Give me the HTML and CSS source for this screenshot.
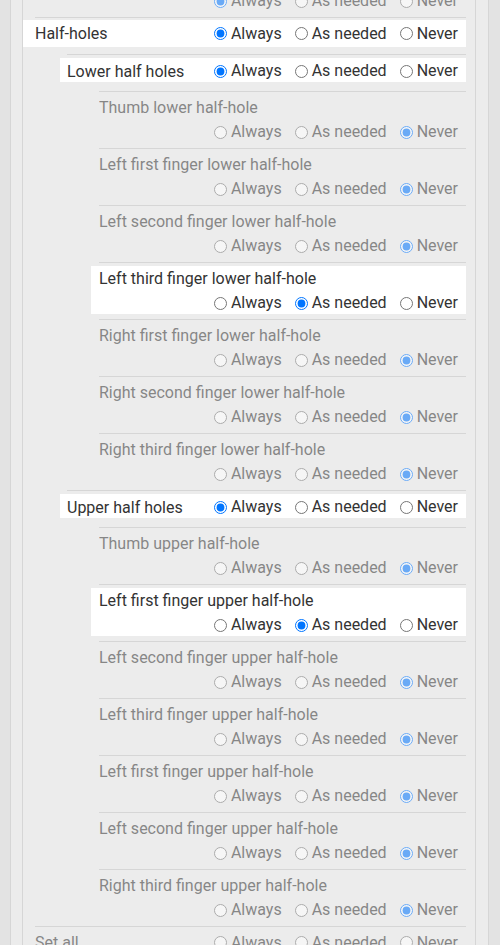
FILE: index.html
```html
<!DOCTYPE html>
<html>
<head>
<meta charset="utf-8">
<link rel="stylesheet" href="styles.css">
</head>
<body>
<div class="panel">
  <div class="list">
    <div class="item l0 off">
      <div class="row two">
        <div class="name">Holes</div>
        <div class="opts">
          <label class="opt"><input type="radio" name="g0" checked>Always</label>
          <label class="opt"><input type="radio" name="g0">As needed</label>
          <label class="opt"><input type="radio" name="g0">Never</label>
        </div>
      </div>
    </div>

    <div class="item l0 parent">
      <div class="row one hl">
        <div class="name">Half-holes</div>
        <div class="opts">
          <label class="opt"><input type="radio" name="g1" checked>Always</label>
          <label class="opt"><input type="radio" name="g1">As needed</label>
          <label class="opt"><input type="radio" name="g1">Never</label>
        </div>
      </div>
      <div class="children">

        <div class="item l1 parent">
          <div class="row one hl">
            <div class="name">Lower half holes</div>
            <div class="opts">
              <label class="opt"><input type="radio" name="g2" checked>Always</label>
              <label class="opt"><input type="radio" name="g2">As needed</label>
              <label class="opt"><input type="radio" name="g2">Never</label>
            </div>
          </div>
          <div class="children">
            <div class="item l2 off">
              <div class="row two">
                <div class="name">Thumb lower half-hole</div>
                <div class="opts">
                  <label class="opt"><input type="radio" name="a1">Always</label>
                  <label class="opt"><input type="radio" name="a1">As needed</label>
                  <label class="opt"><input type="radio" name="a1" checked>Never</label>
                </div>
              </div>
            </div>
            <div class="item l2 off">
              <div class="row two">
                <div class="name">Left first finger lower half-hole</div>
                <div class="opts">
                  <label class="opt"><input type="radio" name="a2">Always</label>
                  <label class="opt"><input type="radio" name="a2">As needed</label>
                  <label class="opt"><input type="radio" name="a2" checked>Never</label>
                </div>
              </div>
            </div>
            <div class="item l2 off">
              <div class="row two">
                <div class="name">Left second finger lower half-hole</div>
                <div class="opts">
                  <label class="opt"><input type="radio" name="a3">Always</label>
                  <label class="opt"><input type="radio" name="a3">As needed</label>
                  <label class="opt"><input type="radio" name="a3" checked>Never</label>
                </div>
              </div>
            </div>
            <div class="item l2">
              <div class="row two hl">
                <div class="name">Left third finger lower half-hole</div>
                <div class="opts">
                  <label class="opt"><input type="radio" name="a4">Always</label>
                  <label class="opt"><input type="radio" name="a4" checked>As needed</label>
                  <label class="opt"><input type="radio" name="a4">Never</label>
                </div>
              </div>
            </div>
            <div class="item l2 off">
              <div class="row two">
                <div class="name">Right first finger lower half-hole</div>
                <div class="opts">
                  <label class="opt"><input type="radio" name="a5">Always</label>
                  <label class="opt"><input type="radio" name="a5">As needed</label>
                  <label class="opt"><input type="radio" name="a5" checked>Never</label>
                </div>
              </div>
            </div>
            <div class="item l2 off">
              <div class="row two">
                <div class="name">Right second finger lower half-hole</div>
                <div class="opts">
                  <label class="opt"><input type="radio" name="a6">Always</label>
                  <label class="opt"><input type="radio" name="a6">As needed</label>
                  <label class="opt"><input type="radio" name="a6" checked>Never</label>
                </div>
              </div>
            </div>
            <div class="item l2 off">
              <div class="row two">
                <div class="name">Right third finger lower half-hole</div>
                <div class="opts">
                  <label class="opt"><input type="radio" name="a7">Always</label>
                  <label class="opt"><input type="radio" name="a7">As needed</label>
                  <label class="opt"><input type="radio" name="a7" checked>Never</label>
                </div>
              </div>
            </div>
          </div>
        </div>

        <div class="item l1 parent">
          <div class="row one hl">
            <div class="name">Upper half holes</div>
            <div class="opts">
              <label class="opt"><input type="radio" name="g3" checked>Always</label>
              <label class="opt"><input type="radio" name="g3">As needed</label>
              <label class="opt"><input type="radio" name="g3">Never</label>
            </div>
          </div>
          <div class="children">
            <div class="item l2 off">
              <div class="row two">
                <div class="name">Thumb upper half-hole</div>
                <div class="opts">
                  <label class="opt"><input type="radio" name="b1">Always</label>
                  <label class="opt"><input type="radio" name="b1">As needed</label>
                  <label class="opt"><input type="radio" name="b1" checked>Never</label>
                </div>
              </div>
            </div>
            <div class="item l2">
              <div class="row two hl">
                <div class="name">Left first finger upper half-hole</div>
                <div class="opts">
                  <label class="opt"><input type="radio" name="b2">Always</label>
                  <label class="opt"><input type="radio" name="b2" checked>As needed</label>
                  <label class="opt"><input type="radio" name="b2">Never</label>
                </div>
              </div>
            </div>
            <div class="item l2 off">
              <div class="row two">
                <div class="name">Left second finger upper half-hole</div>
                <div class="opts">
                  <label class="opt"><input type="radio" name="b3">Always</label>
                  <label class="opt"><input type="radio" name="b3">As needed</label>
                  <label class="opt"><input type="radio" name="b3" checked>Never</label>
                </div>
              </div>
            </div>
            <div class="item l2 off">
              <div class="row two">
                <div class="name">Left third finger upper half-hole</div>
                <div class="opts">
                  <label class="opt"><input type="radio" name="b4">Always</label>
                  <label class="opt"><input type="radio" name="b4">As needed</label>
                  <label class="opt"><input type="radio" name="b4" checked>Never</label>
                </div>
              </div>
            </div>
            <div class="item l2 off">
              <div class="row two">
                <div class="name">Left first finger upper half-hole</div>
                <div class="opts">
                  <label class="opt"><input type="radio" name="b5">Always</label>
                  <label class="opt"><input type="radio" name="b5">As needed</label>
                  <label class="opt"><input type="radio" name="b5" checked>Never</label>
                </div>
              </div>
            </div>
            <div class="item l2 off">
              <div class="row two">
                <div class="name">Left second finger upper half-hole</div>
                <div class="opts">
                  <label class="opt"><input type="radio" name="b6">Always</label>
                  <label class="opt"><input type="radio" name="b6">As needed</label>
                  <label class="opt"><input type="radio" name="b6" checked>Never</label>
                </div>
              </div>
            </div>
            <div class="item l2 off">
              <div class="row two">
                <div class="name">Right third finger upper half-hole</div>
                <div class="opts">
                  <label class="opt"><input type="radio" name="b7">Always</label>
                  <label class="opt"><input type="radio" name="b7">As needed</label>
                  <label class="opt"><input type="radio" name="b7" checked>Never</label>
                </div>
              </div>
            </div>
          </div>
        </div>

      </div>
    </div>

    <div class="item l0 off">
      <div class="row one">
        <div class="name">Set all</div>
        <div class="opts">
          <label class="opt"><input type="radio" name="s">Always</label>
          <label class="opt"><input type="radio" name="s">As needed</label>
          <label class="opt"><input type="radio" name="s">Never</label>
        </div>
      </div>
    </div>
  </div>
</div>
</body>
</html>
```

FILE: styles.css
```css
html, body {
  margin: 0;
  padding: 0;
  height: 945px;
  overflow: hidden;
  background: #e3e3e3;
}

body {
  font-family: Roboto, "Noto Sans", sans-serif;
  font-size: 16px;
  color: #333333;
}

.panel {
  margin: 0 11px 0 10px;
  height: 945px;
  box-sizing: border-box;
  background: #ececec;
  border-left: 1px solid #d6d6d6;
  border-right: 1px solid #d6d6d6;
  padding: 0 12px 0 11px;
  overflow: hidden;
}

.list {
  height: 1000px;
  margin-top: -40px;
  border-left: 1px solid #d6d6d6;
  border-right: 1px solid #d6d6d6;
  padding: 0 9px 0 12px;
}

.item {
  border-top: 1px solid #d6d6d6;
}

.children {
  margin-left: 32px;
}

.row {
  box-sizing: border-box;
  padding-right: 8px;
}

.l0 > .row {
  margin-left: -12px;
  padding-left: 12px;
}

.l2 > .row {
  margin-left: -8px;
  padding-left: 8px;
}

.l1 > .row {
  margin-left: -7px;
  padding-left: 7px;
}

.hl {
  background: #ffffff;
}

.row.two {
  margin-top: 3px;
  margin-bottom: 5px;
  height: 48px;
  padding-top: 1px;
}

.row.two .name {
  line-height: 24px;
  height: 24px;
  white-space: nowrap;
}

.row.one {
  display: flex;
  justify-content: space-between;
  align-items: center;
}

.l0 > .row.one {
  margin-top: 2px;
  height: 27px;
  margin-bottom: 7px;
}

.l1 > .row.one {
  margin-top: 3px;
  height: 24px;
  margin-bottom: 9px;
  padding-top: 2px;
}

.opts {
  display: flex;
  justify-content: flex-end;
  align-items: center;
  gap: 8px;
  height: 24px;
  line-height: 24px;
}

.opt {
  display: inline-flex;
  align-items: center;
  white-space: nowrap;
}

.opt input {
  width: 13px;
  height: 13px;
  margin: 0 4px 0 5px;
}

.off > .row .name,
.off > .row .opt {
  opacity: 0.55;
}
```
